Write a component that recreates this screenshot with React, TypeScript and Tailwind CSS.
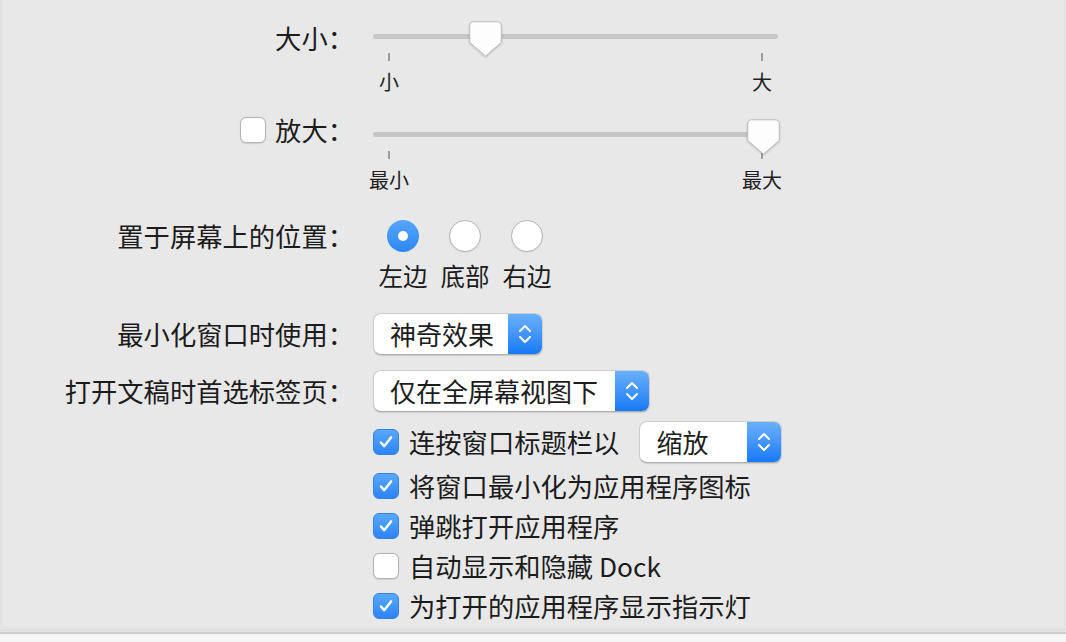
import React from "react";

const FONT = "font-['Noto_Sans_CJK_SC','Noto_Sans',sans-serif]";

function Thumb() {
  return (
    <svg width="33" height="36" viewBox="0 0 33 36" className="drop-shadow-[0_1px_1px_rgba(0,0,0,0.18)]">
      <path
        d="M5 0.75 H28 Q32.25 0.75 32.25 5 V21.5 L16.5 35 L0.75 21.5 V5 Q0.75 0.75 5 0.75 Z"
        fill="#fdfdfd"
        stroke="#bdbdbd"
        strokeWidth="1"
      />
    </svg>
  );
}

// value: 0..1 between the two ticks
function Slider({ value, minLabel, maxLabel }: { value: number; minLabel: string; maxLabel: string }) {
  const left = 16 + value * 374 - 16.5;
  return (
    <div className="relative w-[405px] pt-[34px]">
      <div className="h-[5px] rounded-full bg-[#c6c6c6]" />
      <div className="absolute top-[21px]" style={{ left }}>
        <Thumb />
      </div>
      <div className="-mx-[10px] mt-[14px] flex justify-between">
        {[minLabel, maxLabel].map((l) => (
          <div key={l} className="flex w-[52px] flex-col items-center">
            <div className="h-[8px] w-[1.5px] bg-[#9d9d9d]" />
            <div className="mt-[9px] text-[20px] leading-[24px] text-[#1f1f1f]">{l}</div>
          </div>
        ))}
      </div>
    </div>
  );
}

function Checkbox({ checked }: { checked: boolean }) {
  if (!checked) {
    return (
      <div className="h-[26px] w-[26px] shrink-0 rounded-[6px] border border-[#b4b4b4] bg-white shadow-[0_0.5px_1px_rgba(0,0,0,0.12)]" />
    );
  }
  return (
    <div className="flex h-[26px] w-[26px] shrink-0 items-center justify-center rounded-[6px] border border-[#2f84ee] bg-gradient-to-b from-[#5aa7fb] to-[#2b84f5]">
      <svg width="26" height="26" viewBox="0 0 26 26">
        <path d="M7.5 13.5 L11 17.5 L18.5 8" fill="none" stroke="white" strokeWidth="2.6" strokeLinecap="round" strokeLinejoin="round" />
      </svg>
    </div>
  );
}

function Radio({ checked, label }: { checked: boolean; label: string }) {
  return (
    <div className="flex w-[62px] flex-col items-center">
      {checked ? (
        <div className="flex h-[32px] w-[32px] items-center justify-center rounded-full bg-gradient-to-b from-[#55a5fb] to-[#2c88f6]">
          <div className="h-[10px] w-[10px] rounded-full bg-white" />
        </div>
      ) : (
        <div className="h-[32px] w-[32px] rounded-full border border-[#b8b8b8] bg-white shadow-[0_0.5px_1px_rgba(0,0,0,0.12)]" />
      )}
      <div className="mt-[11px] text-[24.5px] leading-[26px]">{label}</div>
    </div>
  );
}

function Popup({ text, width }: { text: string; width: string }) {
  return (
    <div className={`flex h-[42px] overflow-hidden rounded-[8px] border border-[#cdcdcd] border-b-[#aeaeae] bg-white shadow-[0_1px_1px_rgba(0,0,0,0.12)] ${width}`}>
      <div className="flex-1 pl-[16px] text-[26px] leading-[40px]">{text}</div>
      <div className="flex w-[34px] items-center justify-center bg-gradient-to-b from-[#68b0fb] to-[#1479f6]">
        <svg width="14" height="22" viewBox="0 0 14 22">
          <path d="M2 8 L7 3 L12 8" fill="none" stroke="white" strokeWidth="2" strokeLinecap="round" strokeLinejoin="round" />
          <path d="M2 14 L7 19 L12 14" fill="none" stroke="white" strokeWidth="2" strokeLinecap="round" strokeLinejoin="round" />
        </svg>
      </div>
    </div>
  );
}

const checks = [
  { label: "将窗口最小化为应用程序图标", on: true },
  { label: "弹跳打开应用程序", on: true },
  { label: "自动显示和隐藏 Dock", on: false },
  { label: "为打开的应用程序显示指示灯", on: true },
];

export default function App() {
  return (
    <div className={`flex h-[642px] w-[1066px] flex-col overflow-hidden bg-[#e8e8e8] text-[#1c1c1c] ${FONT}`}>
      <div className="h-[625px] overflow-hidden shadow-[inset_5px_0_5px_-4px_rgba(0,0,0,0.06),inset_-2px_0_2px_-1px_rgba(0,0,0,0.05)]">
        <div className="flex h-[98px]">
          <div className="w-[354px] shrink-0 pt-[25px] text-right text-[26.3px] leading-[26px]">大小：</div>
          <div className="ml-[19px]">
            <Slider value={0.257} minLabel="小" maxLabel="大" />
          </div>
        </div>

        <div className="flex h-[98px]">
          <div className="mt-[19px] flex h-[26px] w-[354px] shrink-0 items-center justify-end gap-[9px]">
            <Checkbox checked={false} />
            <span className="text-[26.3px] leading-[26px]">放大：</span>
          </div>
          <div className="ml-[19px]">
            <Slider value={1} minLabel="最小" maxLabel="最大" />
          </div>
        </div>

        <div className="flex">
          <div className="w-[354px] shrink-0 pt-[27px] text-right text-[26.3px] leading-[26px]">置于屏幕上的位置：</div>
          <div className="ml-[18px] flex pt-[24px]">
            <Radio checked label="左边" />
            <Radio checked={false} label="底部" />
            <Radio checked={false} label="右边" />
          </div>
        </div>

        <div className="mt-[24px] flex h-[42px] items-center">
          <div className="w-[354px] shrink-0 text-right text-[26.3px] leading-[26px]">最小化窗口时使用：</div>
          <div className="ml-[19px]">
            <Popup text="神奇效果" width="w-[170px]" />
          </div>
        </div>

        <div className="mt-[15px] flex h-[42px] items-center">
          <div className="w-[354px] shrink-0 text-right text-[26.3px] leading-[26px]">打开文稿时首选标签页：</div>
          <div className="ml-[19px]">
            <Popup text="仅在全屏幕视图下" width="w-[277px]" />
          </div>
        </div>

        <div className="ml-[373px] mt-[9px] flex flex-col text-[26.3px] leading-[26px]">
          <div className="flex h-[41px] items-center">
            <Checkbox checked />
            <span className="ml-[10px]">连按窗口标题栏以</span>
            <div className="ml-[20px]">
              <Popup text="缩放" width="w-[143px]" />
            </div>
          </div>
          <div className="mt-[4px] flex flex-col">
            {checks.map((c) => (
              <div key={c.label} className="flex h-[40px] items-center">
                <Checkbox checked={c.on} />
                <span className="ml-[10px]">{c.label}</span>
              </div>
            ))}
          </div>
        </div>
      </div>
      <div className="h-[6px] bg-gradient-to-b from-[#e8e8e8] to-[#dfdfdf]" />
      <div className="h-[1px] bg-[#e6e6e6]" />
      <div className="h-[2px] bg-[#cfcfcf]" />
      <div className="flex-1 bg-[#f6f6f6]" />
    </div>
  );
}
